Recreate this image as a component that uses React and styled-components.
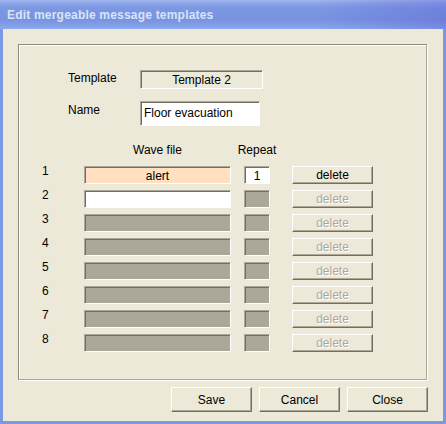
import React from 'react'
import styled, { createGlobalStyle, css } from 'styled-components'

const GlobalStyle = createGlobalStyle`
  html, body {
    margin: 0;
    padding: 0;
    background: #ece9d8;
  }
  * {
    box-sizing: border-box;
  }
`

const sunken = css`
  border: 1px solid;
  border-color: #aca899 #fff #fff #aca899;
  box-shadow: inset 1px 1px 0 #716f64;
`

const raised = css`
  border: 1px solid;
  border-color: #fff #716f64 #716f64 #fff;
  box-shadow: inset -1px -1px 0 #aca899;
`

const Window = styled.div`
  width: 446px;
  height: 424px;
  display: flex;
  flex-direction: column;
  background: #7c97e4;
  font-family: "Liberation Sans", Arial, sans-serif;
  font-size: 12px;
  color: #000;
`

const TitleBar = styled.div`
  height: 29px;
  flex: none;
  display: flex;
  align-items: center;
  padding: 1px 0 0 7px;
  background:
    linear-gradient(90deg, rgba(0, 0, 0, 0) 70%, rgba(90, 90, 210, 0.35) 100%),
    linear-gradient(180deg, #a3b8ee 0px, #8ea7ea 3px, #7c98e2 8px, #7993e0 20px, #86a3ea 27px, #8caaee 29px);
  color: #d8e4f8;
  font-family: "Liberation Sans", Arial, sans-serif;
  font-weight: bold;
  font-size: 12px;
  letter-spacing: 0.2px;
`

const Body = styled.div`
  flex: 1;
  margin: 0 3px 3px 3px;
  background: #ece9d8;
  padding: 15px 16px 8px 15px;
  display: flex;
  flex-direction: column;
`

const Panel = styled.div`
  height: 336px;
  flex: none;
  border: 1px solid #aca899;
  border-top-color: #8d8b80;
  border-left-color: #8d8b80;
  box-shadow: 1px 1px 0 #fff, inset 1px 1px 0 #fff;
  padding-top: 25px;
`

const FieldRow = styled.div`
  display: flex;
  align-items: flex-start;
  margin-left: 49px;
  margin-top: ${p => p.$top || 0}px;
`

const FieldLabel = styled.div`
  width: 72px;
  line-height: 14px;
  margin-top: ${p => p.$offset}px;
`

const TemplateBox = styled.div`
  ${sunken};
  width: 123px;
  height: 19px;
  display: flex;
  align-items: center;
  justify-content: center;
  padding-top: 1px;
`

const NameBox = styled.div`
  ${sunken};
  width: 120px;
  height: 25px;
  background: #fff;
  display: flex;
  align-items: center;
  padding: 0 0 2px 3px;
`

const Grid = styled.div`
  display: grid;
  grid-template-columns: 42px 147px 52px 90px;
  row-gap: 6px;
  margin-left: 23px;
  margin-top: ${p => p.$top || 0}px;
`

const Header = styled.div`
  grid-column: ${p => p.$col};
  text-align: center;
  line-height: 14px;
  margin-bottom: 3px;
`

const RowNum = styled.div`
  grid-column: 1;
  line-height: 14px;
  margin-top: -2px;
`

const WaveField = styled.div`
  ${sunken};
  height: 18px;
  background: ${p => (p.$state === 'active' ? '#ffe0c1' : p.$state === 'empty' ? '#fff' : '#aca899')};
  display: flex;
  align-items: center;
  justify-content: center;
  padding-top: 1px;
`

const RepeatField = styled.div`
  ${sunken};
  width: 26px;
  height: 18px;
  justify-self: center;
  background: ${p => (p.$active ? '#fff' : '#aca899')};
  display: flex;
  align-items: center;
  justify-content: center;
  padding-top: 1px;
`

const DeleteButton = styled.div`
  ${raised};
  width: 81px;
  height: 18px;
  justify-self: end;
  background: #ece9d8;
  display: flex;
  align-items: center;
  justify-content: center;
  color: ${p => (p.$disabled ? '#aca899' : '#000')};
  text-shadow: ${p => (p.$disabled ? '1px 1px 0 #fff' : 'none')};
`

const ButtonBar = styled.div`
  display: flex;
  justify-content: flex-end;
  gap: 7px;
  margin-top: 7px;
  margin-right: -1px;
`

const DialogButton = styled.div`
  ${raised};
  width: 81px;
  height: 25px;
  display: flex;
  align-items: center;
  justify-content: center;
  padding-top: 1px;
`

const rows = [1, 2, 3, 4, 5, 6, 7, 8]

export default function App() {
  return (
    <>
      <GlobalStyle />
      <Window>
        <TitleBar>Edit mergeable message templates</TitleBar>
        <Body>
          <Panel>
            <FieldRow>
              <FieldLabel $offset={1}>Template</FieldLabel>
              <TemplateBox>Template 2</TemplateBox>
            </FieldRow>
            <FieldRow $top={12}>
              <FieldLabel $offset={2}>Name</FieldLabel>
              <NameBox>Floor evacuation</NameBox>
            </FieldRow>
            <Grid $top={17}>
              <Header $col={2}>Wave file</Header>
              <Header $col={3}>Repeat</Header>
              {rows.map(n => (
                <React.Fragment key={n}>
                  <RowNum>{n}</RowNum>
                  <WaveField $state={n === 1 ? 'active' : n === 2 ? 'empty' : 'off'}>
                    {n === 1 ? 'alert' : ''}
                  </WaveField>
                  <RepeatField $active={n === 1}>{n === 1 ? '1' : ''}</RepeatField>
                  <DeleteButton $disabled={n !== 1}>delete</DeleteButton>
                </React.Fragment>
              ))}
            </Grid>
          </Panel>
          <ButtonBar>
            <DialogButton>Save</DialogButton>
            <DialogButton>Cancel</DialogButton>
            <DialogButton>Close</DialogButton>
          </ButtonBar>
        </Body>
      </Window>
    </>
  )
}
